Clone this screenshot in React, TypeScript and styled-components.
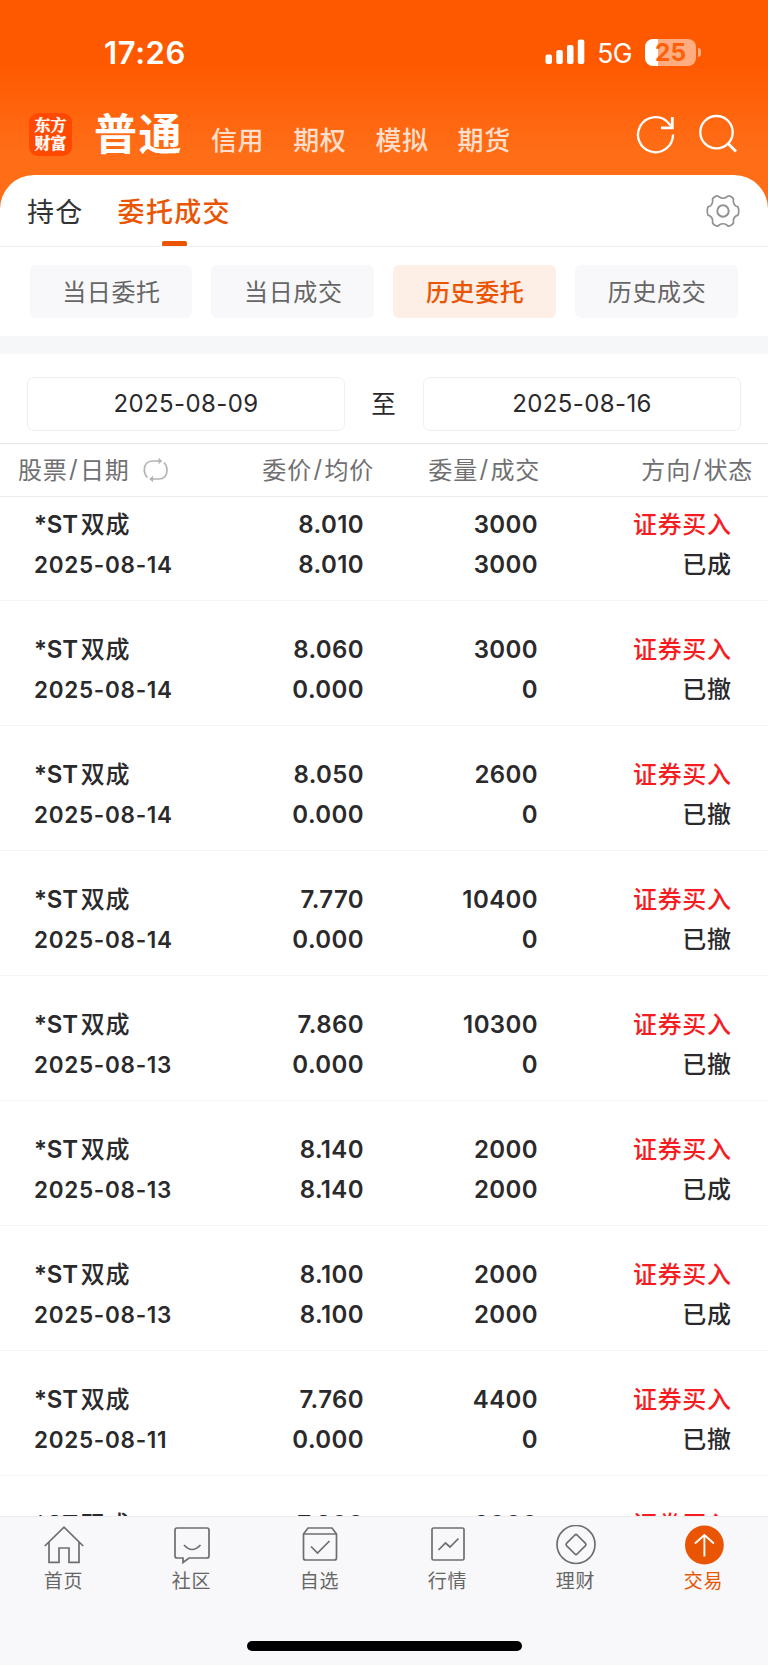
import React from "react";
import styled, { createGlobalStyle } from "styled-components";

const Global = createGlobalStyle`
  *, *::before, *::after { box-sizing: border-box; }
  body {
    margin: 0;
    background: #ffffff;
    font-family: Inter, "Noto Sans CJK SC", sans-serif;
    color: #2a2a2c;
  }
`;

const Screen = styled.div`
  width: 768px;
  height: 1665px;
  display: flex;
  flex-direction: column;
  overflow: hidden;
  background: linear-gradient(180deg, #ff5900 0px, #ff5900 64px, #ff6d17 150px, #ff6d17 240px);
`;

const StatusBar = styled.header`
  height: 104px;
  flex: none;
  display: flex;
  justify-content: space-between;
  align-items: flex-start;
  padding: 36px 67px 0 104px;
  color: #fff;
`;

const Clock = styled.span`
  font-size: 31px;
  line-height: 34px;
  font-weight: 600;
  letter-spacing: 0.6px;
`;

const StatusIcons = styled.div`
  display: flex;
  align-items: center;
  height: 32px;
`;

const Network = styled.span`
  font-size: 26.5px;
  line-height: 32px;
  margin: 2px 13px 0 12px;
  letter-spacing: -0.6px;
`;

const Battery = styled.div`
  display: flex;
  align-items: center;
  gap: 2px;
`;

const BatteryBody = styled.div`
  width: 51px;
  height: 27px;
  border-radius: 8px;
  background: linear-gradient(90deg, #fff 0 25%, #ffac80 25% 100%);
  color: #ff5f08;
  font-size: 24.5px;
  line-height: 27px;
  font-weight: 700;
  text-align: center;
`;

const BatteryCap = styled.div`
  width: 3px;
  height: 9px;
  border-radius: 0 4px 4px 0;
  background: #ffac80;
`;

const AppBar = styled.nav`
  height: 71px;
  flex: none;
  display: flex;
  align-items: flex-start;
  padding: 0 30px 0 29px;
  color: #fff;
`;

const Logo = styled.div`
  width: 43px;
  height: 43px;
  margin-top: 9px;
  border-radius: 9px;
  background: #ff4800;
  font-family: "Noto Serif CJK SC", "Noto Sans CJK SC", serif;
  font-size: 16px;
  line-height: 17.5px;
  font-weight: 700;
  -webkit-text-stroke: 0.4px #fff;
  text-align: center;
  padding-top: 3px;
`;

const MainAccount = styled.span`
  margin-left: 22px;
  width: 90px;
  font-size: 43px;
  line-height: 60px;
  font-weight: 700;
  letter-spacing: 1.5px;
  white-space: nowrap;
`;

const Accounts = styled.div`
  display: flex;
  gap: 29px;
  margin-left: 27px;
  padding-top: 18px;
`;

const Account = styled.span`
  font-size: 26px;
  line-height: 38px;
  letter-spacing: 0.6px;
  font-weight: 500;
  color: #ffdfcc;
`;

const AppActions = styled.div`
  margin-left: auto;
  display: flex;
  gap: 22px;
  padding-top: 10px;
`;

const Sheet = styled.main`
  flex: 1;
  min-height: 0;
  display: flex;
  flex-direction: column;
  background: #fff;
  border-radius: 34px 34px 0 0;
  overflow: hidden;
`;

const SectionTabs = styled.div`
  height: 72px;
  flex: none;
  display: flex;
  align-items: flex-start;
  gap: 34px;
  padding: 0 28px 0 27px;
  border-bottom: 1px solid #f1f1f3;
`;

const SectionTab = styled.div<{ $active?: boolean }>`
  height: 71px;
  display: flex;
  flex-direction: column;
  align-items: center;
  justify-content: space-between;
  font-size: 27px;
  line-height: 75px;
  letter-spacing: 1.3px;
  font-weight: ${(p) => (p.$active ? 500 : 400)};
  color: ${(p) => (p.$active ? "#ea5504" : "#333")};

  &::after {
    content: "";
    width: 25px;
    height: 5px;
    flex: none;
    margin-top: -9px;
    border-radius: 2px 2px 1px 1px;
    background: ${(p) => (p.$active ? "#ea5504" : "transparent")};
  }
`;

const SettingsButton = styled.div`
  margin-left: auto;
  padding-top: 19px;
  height: 52px;
`;

const Filters = styled.div`
  flex: none;
  display: grid;
  grid-template-columns: repeat(4, 1fr);
  gap: 19px;
  padding: 18px 30px 18px 29.5px;
`;

const Chip = styled.div<{ $active?: boolean }>`
  height: 53px;
  padding: 0 0 2px 1px;
  border-radius: 6px;
  display: flex;
  align-items: center;
  justify-content: center;
  font-size: 24px;
  letter-spacing: 0.6px;
  font-weight: ${(p) => (p.$active ? 500 : 400)};
  color: ${(p) => (p.$active ? "#ea5504" : "#666")};
  background: ${(p) => (p.$active ? "#fdeee6" : "#f8f8fa")};
`;

const Divider = styled.div`
  height: 18px;
  flex: none;
  background: #f6f7f9;
`;

const DateRange = styled.div`
  flex: none;
  height: 90px;
  display: flex;
  align-items: center;
  justify-content: space-between;
  padding: 10px 27px 0;
  border-bottom: 1px solid #e6e6e8;
`;

const RangeWord = styled.span`
  font-size: 24.5px;
  line-height: 36px;
  margin: 0 1px 0 0;
`;

const DateField = styled.div`
  width: 318px;
  height: 54px;
  border: 1px solid #efefef;
  border-radius: 7px;
  display: flex;
  align-items: center;
  justify-content: center;
  font-size: 24px;
  letter-spacing: 0.4px;
`;

const TableHead = styled.div`
  flex: none;
  height: 53px;
  display: grid;
  grid-template-columns: 202px 154px 166px 1fr;
  align-items: center;
  padding: 0 15px 3px 18px;
  border-bottom: 1px solid #ebebed;
  color: #707072;
  font-size: 24px;
  letter-spacing: 0.8px;
`;

const HeadCell = styled.div<{ $left?: boolean }>`
  display: flex;
  align-items: center;
  justify-content: ${(p) => (p.$left ? "flex-start" : "flex-end")};
  white-space: nowrap;
`;

const Slash = styled.span`
  margin: 0 1.5px;
`;

const SwapIcon = styled.svg`
  margin: 3px 0 0 13px;
`;

const Rows = styled.div`
  flex: 1;
  min-height: 0;
  overflow: hidden;
`;

const Row = styled.div`
  height: 125px;
  display: grid;
  grid-template-columns: 165px 165px 174px 1fr;
  align-items: end;
  padding: 0 36.5px 14px 34px;
  border-bottom: 1px solid #f5f5f6;

  &:first-child { height: 104px; }
`;

const Cell = styled.div<{ $left?: boolean }>`
  text-align: ${(p) => (p.$left ? "left" : "right")};
  font-size: 24px;
  line-height: 40px;
  height: 81px;
  font-weight: 500;
  letter-spacing: 0.6px;
  white-space: nowrap;
`;

const Figure = styled.div`
  font-weight: 600;
  letter-spacing: 0.4px;
`;

const StockName = styled.div`
  display: flex;
  gap: 3px;
`;

const Prefix = styled.span`
  font-weight: 600;
  letter-spacing: -0.2px;
`;

const OrderDate = styled.div`
  font-size: 22.5px;
  font-weight: 600;
  letter-spacing: 0.7px;
`;

const Direction = styled.div`
  color: #f51d22;
`;

const State = styled.div``;

const BottomBar = styled.footer`
  flex: none;
  height: 149px;
  background: #f8f8fa;
  border-top: 1px solid #ededef;
  display: flex;
  flex-direction: column;
  align-items: center;
  justify-content: space-between;
  padding-bottom: 14px;
`;

const NavItems = styled.div`
  width: 100%;
  display: grid;
  grid-template-columns: repeat(6, 1fr);
`;

const NavItem = styled.div<{ $active?: boolean }>`
  display: flex;
  flex-direction: column;
  align-items: center;
  padding-top: 8px;
  font-size: 19px;
  line-height: 28px;
  letter-spacing: 0.8px;
  color: ${(p) => (p.$active ? "#ea5504" : "#666")};
`;

const NavIcon = styled.svg`
  margin-bottom: 3px;
`;

const NavLabel = styled.span`
  margin-right: 1px;
`;

const HomeIndicator = styled.div`
  width: 275px;
  height: 10px;
  border-radius: 5px;
  background: #000;
`;

const orders = [
  { date: "2025-08-14", price: "8.010", avg: "8.010", qty: "3000", done: "3000", state: "已成" },
  { date: "2025-08-14", price: "8.060", avg: "0.000", qty: "3000", done: "0", state: "已撤" },
  { date: "2025-08-14", price: "8.050", avg: "0.000", qty: "2600", done: "0", state: "已撤" },
  { date: "2025-08-14", price: "7.770", avg: "0.000", qty: "10400", done: "0", state: "已撤" },
  { date: "2025-08-13", price: "7.860", avg: "0.000", qty: "10300", done: "0", state: "已撤" },
  { date: "2025-08-13", price: "8.140", avg: "8.140", qty: "2000", done: "2000", state: "已成" },
  { date: "2025-08-13", price: "8.100", avg: "8.100", qty: "2000", done: "2000", state: "已成" },
  { date: "2025-08-11", price: "7.760", avg: "0.000", qty: "4400", done: "0", state: "已撤" },
  { date: "2025-08-11", price: "7.800", avg: "0.000", qty: "2000", done: "0", state: "已撤" },
];

const navItems = [
  {
    label: "首页",
    icon: (
      <path d="M0.800 21 20 2.200 39.200 21M5 17.500V37.300H15V23H25V37.300H35V17.500" />
    ),
  },
  {
    label: "社区",
    icon: (
      <>
        <path d="M5 3H35Q37 3 37 5V31Q37 33 35 33H17L11 37.500V33H5Q3 33 3 31V5Q3 3 5 3Z" />
        <path d="M12 20Q20 29 28.500 20" />
      </>
    ),
  },
  {
    label: "自选",
    icon: (
      <>
        <path d="M3.500 9 8 3H32L36.500 9V33Q36.500 35 34.500 35H5.500Q3.500 35 3.500 33Z" />
        <path d="M3.500 9H36.500M11 21.500 17.500 28 29.500 16" />
      </>
    ),
  },
  {
    label: "行情",
    icon: (
      <>
        <rect x="4" y="3" width="32" height="32" rx="1.500" />
        <path d="M10.500 25 17.500 18 22 22 30.500 13.500" />
      </>
    ),
  },
  {
    label: "理财",
    icon: (
      <>
        <circle cx="20" cy="19.500" r="19" />
        <path d="M18.900 10 10.500 18.400Q9.500 19.500 10.500 20.600L18.900 29Q20 30 21.100 29L29.500 20.600Q30.500 19.500 29.500 18.400L21.100 10Q20 9 18.900 10Z" />
      </>
    ),
  },
  {
    label: "交易",
    active: true,
    icon: (
      <>
        <circle cx="20.400" cy="20" r="19.400" fill="#ea5504" stroke="none" />
        <path d="M20.400 31.500V10.500M10.900 18.500 20.400 10 29.900 18.500" stroke="#fff" strokeWidth="1.900" />
      </>
    ),
  },
];

export default function App() {
  return (
    <Screen>
      <Global />
      <StatusBar>
        <Clock>17:26</Clock>
        <StatusIcons>
          <svg width="40" height="26" viewBox="0 0 40 26" fill="#fff">
            <rect x="0.500" y="15.500" width="6.500" height="9.500" rx="2" />
            <rect x="11.300" y="11" width="6.500" height="14" rx="2" />
            <rect x="22" y="6" width="6.500" height="19" rx="2" />
            <rect x="32.800" y="0.500" width="6.500" height="24.500" rx="2" />
          </svg>
          <Network>5G</Network>
          <Battery>
            <BatteryBody>25</BatteryBody>
            <BatteryCap />
          </Battery>
        </StatusIcons>
      </StatusBar>
      <AppBar>
        <Logo>
          东方
          <br />
          财富
        </Logo>
        <MainAccount>普通</MainAccount>
        <Accounts>
          {["信用", "期权", "模拟", "期货"].map((t) => (
            <Account key={t}>{t}</Account>
          ))}
        </Accounts>
        <AppActions>
          <svg width="40" height="40" viewBox="0 0 40 40" fill="none" stroke="#fff" strokeWidth="2.300">
            <path d="M37 20.500A17.500 17.500 0 1 1 31.500 8L36 13" />
            <path d="M36.300 3V13.800H25" strokeWidth="2.800" />
          </svg>
          <svg width="40" height="40" viewBox="0 0 40 40" fill="none" stroke="#fff" strokeWidth="2.300">
            <circle cx="18.500" cy="18.200" r="16.200" />
            <path d="M30 29.500 38 37.500" strokeWidth="2.800" />
          </svg>
        </AppActions>
      </AppBar>
      <Sheet>
        <SectionTabs>
          <SectionTab>持仓</SectionTab>
          <SectionTab $active>委托成交</SectionTab>
          <SettingsButton>
            <svg width="34" height="34" viewBox="0 0 34 34" fill="none" stroke="#929292" strokeWidth="1.700">
              <circle cx="17" cy="17" r="5.700" strokeWidth="2" />
              <path d="M11 1.800Q12.500 1.800 13.200 3Q17 5.500 20.800 3Q21.500 1.800 23 1.800Q27 3.300 27.500 5.200Q26.500 11.200 32 12.900Q33.500 17 32 21.100Q26.500 22.800 27.500 28.800Q27 30.700 23 32.200Q21.500 32.200 20.800 31Q17 28.500 13.200 31Q12.500 32.200 11 32.200Q7 30.700 6.500 28.800Q7.500 22.800 2 21.100Q0.500 17 2 12.900Q7.500 11.200 6.500 5.200Q7 3.300 11 1.800Z" />
            </svg>
          </SettingsButton>
        </SectionTabs>
        <Filters>
          <Chip>当日委托</Chip>
          <Chip>当日成交</Chip>
          <Chip $active>历史委托</Chip>
          <Chip>历史成交</Chip>
        </Filters>
        <Divider />
        <DateRange>
          <DateField>2025-08-09</DateField>
          <RangeWord>至</RangeWord>
          <DateField>2025-08-16</DateField>
        </DateRange>
        <TableHead>
          <HeadCell $left>
            股票<Slash>/</Slash>日期
            <SwapIcon width="26" height="26" viewBox="0 0 26 26" fill="none" stroke="#b4b4b4" strokeWidth="1.700">
              <path d="M4.500 20.500Q1.300 17.500 1.300 13Q1.300 4 10 4H17M21 5.500Q24 8.500 24 13Q24 22 15.500 22H9" />
              <path d="M15.500 0.800 19.300 4 15.500 7.200ZM10 18.800 6.200 22 10 25.200Z" fill="#b4b4b4" stroke="none" />
            </SwapIcon>
          </HeadCell>
          <HeadCell>委价<Slash>/</Slash>均价</HeadCell>
          <HeadCell>委量<Slash>/</Slash>成交</HeadCell>
          <HeadCell>方向<Slash>/</Slash>状态</HeadCell>
        </TableHead>
        <Rows>
          {orders.map((o, i) => (
            <Row key={i}>
              <Cell $left>
                <StockName>
                  <Prefix>*ST</Prefix>
                  <span>双成</span>
                </StockName>
                <OrderDate>{o.date}</OrderDate>
              </Cell>
              <Cell>
                <Figure>{o.price}</Figure>
                <Figure>{o.avg}</Figure>
              </Cell>
              <Cell>
                <Figure>{o.qty}</Figure>
                <Figure>{o.done}</Figure>
              </Cell>
              <Cell>
                <Direction>证券买入</Direction>
                <State>{o.state}</State>
              </Cell>
            </Row>
          ))}
        </Rows>
      </Sheet>
      <BottomBar>
        <NavItems>
          {navItems.map((n) => (
            <NavItem key={n.label} $active={n.active}>
              <NavIcon width="40" height="40" viewBox="0 0 40 40" fill="none" stroke="#6e6e70" strokeWidth="1.700">
                {n.icon}
              </NavIcon>
              <NavLabel>{n.label}</NavLabel>
            </NavItem>
          ))}
        </NavItems>
        <HomeIndicator />
      </BottomBar>
    </Screen>
  );
}
